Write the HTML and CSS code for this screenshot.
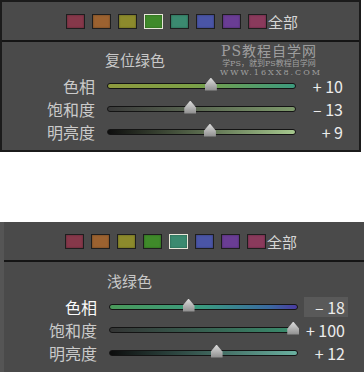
FILE: index.html
```html
<!DOCTYPE html>
<html lang="zh-CN">
<head>
    <meta charset="UTF-8">
    <title>HSL 颜色面板</title>
    <link rel="stylesheet" href="styles.css">
</head>
<body>
    <div class="panel panel-top">
        <div class="swatches">
            <span class="swatch red"></span>
            <span class="swatch orange"></span>
            <span class="swatch yellow"></span>
            <span class="swatch green selected"></span>
            <span class="swatch aqua"></span>
            <span class="swatch blue"></span>
            <span class="swatch purple"></span>
            <span class="swatch magenta"></span>
            <span class="all">全部</span>
        </div>
        <div class="body">
            <div class="title">复位绿色</div>
            <div class="row">
                <span class="label">色相</span>
                <div class="track hue-green"><span class="thumb" style="left: 55%"></span></div>
                <span class="value">+ 10</span>
            </div>
            <div class="row">
                <span class="label">饱和度</span>
                <div class="track sat-green"><span class="thumb" style="left: 44%"></span></div>
                <span class="value">– 13</span>
            </div>
            <div class="row">
                <span class="label">明亮度</span>
                <div class="track lum-green"><span class="thumb" style="left: 54.5%"></span></div>
                <span class="value">+ 9</span>
            </div>
        </div>
        <div class="watermark">
            <div class="wm-title">PS教程自学网</div>
            <div class="wm-sub">学PS，就到PS教程自学网</div>
            <div class="wm-url">WWW.16XX8.COM</div>
        </div>
    </div>

    <div class="panel panel-bottom">
        <div class="swatches">
            <span class="swatch red"></span>
            <span class="swatch orange"></span>
            <span class="swatch yellow"></span>
            <span class="swatch green"></span>
            <span class="swatch aqua selected"></span>
            <span class="swatch blue"></span>
            <span class="swatch purple"></span>
            <span class="swatch magenta"></span>
            <span class="all">全部</span>
        </div>
        <div class="body">
            <div class="title">浅绿色</div>
            <div class="row active">
                <span class="label">色相</span>
                <div class="track hue-aqua"><span class="thumb" style="left: 42%"></span></div>
                <span class="value boxed">– 18</span>
            </div>
            <div class="row">
                <span class="label">饱和度</span>
                <div class="track sat-aqua"><span class="thumb" style="left: 98%"></span></div>
                <span class="value">+ 100</span>
            </div>
            <div class="row">
                <span class="label">明亮度</span>
                <div class="track lum-aqua"><span class="thumb" style="left: 57%"></span></div>
                <span class="value">+ 12</span>
            </div>
        </div>
    </div>
</body>
</html>
```

FILE: styles.css
```css
body {
    margin: 0;
    background: #fff;
    font-family: "Noto Sans CJK SC", "Noto Sans", sans-serif;
    width: 364px;
}

.panel {
    position: relative;
    background: #4a4a4a;
    color: #cfcfcf;
}

.panel-top {
    width: 357px;
    height: 148px;
    border: 2px solid #1b1b1b;
}

.panel-bottom {
    margin-top: 70px;
    width: 360px;
    height: 150px;
    border-left: 4px solid #555;
}

.swatches {
    display: flex;
    align-items: center;
    gap: 7px;
    height: 38px;
    padding-left: 64px;
    border-bottom: 2px solid #151515;
}

.panel-bottom .swatches {
    padding-left: 61px;
}

.swatch {
    width: 17px;
    height: 13px;
    border: 1px solid #1e1e1e;
    box-shadow: inset 0 0 2px rgba(0, 0, 0, 0.4);
}

.swatch.selected {
    border-color: #e6e6d8;
}

.red { background: #86384a; }
.orange { background: #9c6230; }
.yellow { background: #8c8a2c; }
.green { background: #3f8a2a; }
.aqua { background: #3b8a70; }
.blue { background: #4a55a6; }
.purple { background: #6a3d94; }
.magenta { background: #8a3a5c; }

.all {
    margin-left: -6px;
    font-size: 15px;
    line-height: 1;
    color: #d6d6d6;
}

.body {
    padding-top: 8px;
}

.panel-bottom .body {
    padding-top: 9px;
}

.title {
    height: 20px;
    line-height: 20px;
    padding-left: 103px;
    margin-bottom: 4px;
    font-size: 15px;
    color: #c8c8c8;
}

.row {
    display: flex;
    align-items: center;
    height: 23px;
}

.label {
    width: 93px;
    text-align: right;
    font-size: 16px;
    color: #cacaca;
}

.row.active .label {
    color: #fafafa;
}

.track {
    position: relative;
    width: 187px;
    height: 4px;
    margin-left: 12px;
    border: 1px solid #141414;
    border-radius: 3px;
}

.hue-green { background: linear-gradient(to right, #8e9a3e, #7ca046 45%, #3c9a7e); }
.sat-green { background: linear-gradient(to right, #3a3a3a, #7e9a6c); }
.lum-green { background: linear-gradient(to right, #0e0e0e, #a6c88e); }
.hue-aqua { background: linear-gradient(to right, #4a9a5a, #3a9a80 50%, #3a6aa0 85%, #4a3aa0); }
.sat-aqua { background: linear-gradient(to right, #343434, #3a8e6e); }
.lum-aqua { background: linear-gradient(to right, #0c0c0c, #6ab0a0); }

.thumb {
    position: absolute;
    top: -6px;
    width: 12px;
    height: 13px;
    margin-left: -6px;
    background: linear-gradient(#dcdcdc, #8c8c8c);
    clip-path: polygon(50% 0, 100% 55%, 100% 100%, 0 100%, 0 55%);
}

.value {
    width: 47px;
    text-align: right;
    font-size: 16px;
    color: #ececec;
    white-space: pre;
}

.value.boxed {
    width: 41px;
    margin-left: 6px;
    padding-right: 3px;
    background: #595959;
    line-height: 20px;
}

.watermark {
    position: absolute;
    left: 218px;
    top: 42px;
    width: 98px;
    text-align: center;
    color: rgba(230, 230, 230, 0.55);
    font-family: "DejaVu Serif", "Noto Sans CJK SC", serif;
    line-height: 1;
}

.wm-title {
    font-size: 14px;
    letter-spacing: 1px;
}

.wm-sub {
    margin-top: 2px;
    font-size: 8px;
}

.wm-url {
    margin-top: 1px;
    font-size: 8px;
    letter-spacing: 2px;
}
```
